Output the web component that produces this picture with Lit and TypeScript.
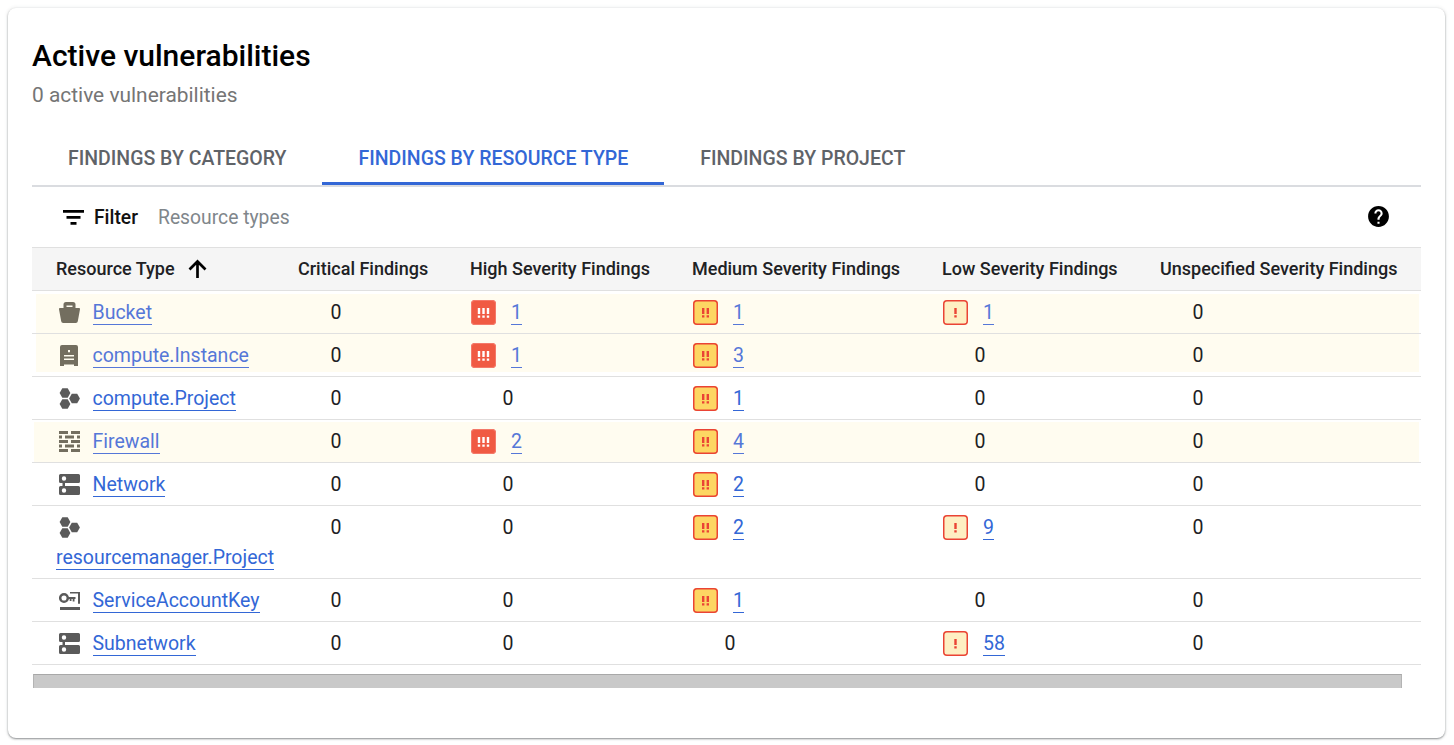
import { LitElement, html, css, svg } from 'lit';
import { customElement } from 'lit/decorators.js';

const hex = (cx: number, cy: number, r: number) =>
  [0, 60, 120, 180, 240, 300]
    .map((a) => {
      const t = (a * Math.PI) / 180;
      return `${(cx + r * Math.cos(t)).toFixed(2)},${(cy + r * Math.sin(t)).toFixed(2)}`;
    })
    .join(' ');

const ICONS: Record<string, unknown> = {
  bucket: svg`<path fill-rule="evenodd" d="M4.500 6V2.500A2.500 2.500 0 0 1 7 0h7a2.500 2.500 0 0 1 2.500 2.500V6H20a1 1 0 0 1 1 1.200l-2.200 12a2 2 0 0 1-2 1.800H4.200a2 2 0 0 1-2-1.800L0 7.200A1 1 0 0 1 1 6zM7.500 3.500V5h6V3.500z"/>`,
  instance: svg`<path fill-rule="evenodd" d="M3 0h14a2 2 0 0 1 2 2v19h-4v-1.500H5V21H1V2a2 2 0 0 1 2-2zM9 5v2.200h2V5zM5 10v1.600h10V10zM5 13.400V15h10v-1.600z"/>`,
  project: svg`<polygon points=${hex(6, 5, 5.4)}/><polygon points=${hex(6, 16, 5.4)}/><polygon points=${hex(15.5, 10.5, 5.4)}/>`,
  firewall: svg`<path d="M0 0h9v3H0zM12 0h9v3h-9zM0 4.500h3v3H0zM6 4.500h9v3H6zM18 4.500h3v3h-3zM0 9h9v3H0zM12 9h9v3h-9zM0 13.500h3v3H0zM6 13.500h9v3H6zM18 13.500h3v3h-3zM0 18h9v3H0zM12 18h9v3h-9z"/>`,
  network: svg`<path fill-rule="evenodd" d="M1.500 0h18A1.500 1.500 0 0 1 21 1.500V7.500A1.500 1.500 0 0 1 19.500 9H6v3h13.500a1.500 1.500 0 0 1 1.500 1.500v6a1.500 1.500 0 0 1-1.500 1.500h-18A1.500 1.500 0 0 1 0 19.500v-6A1.500 1.500 0 0 1 1.500 12H3.500V9H1.500A1.500 1.500 0 0 1 0 7.500V1.500A1.500 1.500 0 0 1 1.500 0zM5 2.300a2.200 2.200 0 1 0 0 4.400 2.200 2.200 0 0 0 0-4.400zM5 14.300a2.200 2.200 0 1 0 0 4.400 2.200 2.200 0 0 0 0-4.400z"/>`,
  key: svg`<g transform="translate(0 2)"><circle cx="5" cy="6" r="3.800" fill="none" stroke="currentColor" stroke-width="2.500"/><path d="M11 0h10v11.700h-2V1.500h-8zM8.500 5h8v2h-1v2.500h-1.800V7h-1.200v2h-1.800V7H8.500zM1 15h20v3H1z"/></g>`,
};

const BADGES: Record<string, unknown> = {
  high: svg`<path fill="#fff" d="M6.800 8h2.400v6H6.800zM6.800 15.500h2.400v2.300H6.800zM11.300 8h2.400v6h-2.400zM11.300 15.500h2.400v2.300h-2.400zM15.800 8h2.400v6h-2.400zM15.800 15.500h2.400v2.300h-2.400z"/>`,
  med: svg`<path fill="#ea4335" d="M9 8h2.400v6H9zM9 15.300h2.400v2.300H9zM13.600 8H16v6h-2.400zM13.600 15.300H16v2.300h-2.400z"/>`,
  low: svg`<path fill="#ea4335" d="M11.300 8h2.400v6h-2.400zM11.300 15.300h2.400v2.300h-2.400z"/>`,
};

type Count = [string, number] | 0;
interface Row {
  icon: string;
  name: string;
  hl?: string;
  tall?: boolean;
  high: Count;
  med: Count;
  low: Count;
}

const ROWS: Row[] = [
  { icon: 'bucket', name: 'Bucket', hl: 'hl-a', high: ['high', 1], med: ['med', 1], low: ['low', 1] },
  { icon: 'instance', name: 'compute.Instance', hl: 'hl-b', high: ['high', 1], med: ['med', 3], low: 0 },
  { icon: 'project', name: 'compute.Project', high: 0, med: ['med', 1], low: 0 },
  { icon: 'firewall', name: 'Firewall', hl: 'hl-c', high: ['high', 2], med: ['med', 4], low: 0 },
  { icon: 'network', name: 'Network', high: 0, med: ['med', 2], low: 0 },
  { icon: 'project', name: 'resourcemanager.Project', tall: true, high: 0, med: ['med', 2], low: ['low', 9] },
  { icon: 'key', name: 'ServiceAccountKey', high: 0, med: ['med', 1], low: 0 },
  { icon: 'network', name: 'Subnetwork', high: 0, med: 0, low: ['low', 58] },
];

@customElement('app-root')
export class AppRoot extends LitElement {
  static styles = css`
    :host {
      display: block;
      height: 745px;
      box-sizing: border-box;
      padding: 8px 9px 7px 8px;
      overflow: hidden;
      font-family: Roboto, sans-serif;
      background: #fff;
      color: #202124;
    }
    .card {
      box-sizing: border-box;
      height: 730px;
      padding: 30px 24px 0;
      background: #fff;
      border-radius: 8px;
      box-shadow: 0 1px 2px rgba(60, 64, 67, 0.55), 0 0 4px rgba(60, 64, 67, 0.12);
    }
    h1 {
      margin: 0;
      font-size: 30px;
      line-height: 36px;
      font-weight: 500;
      color: #000;
    }
    .sub {
      margin-top: 6px;
      font-size: 20.9px;
      line-height: 30px;
      color: #757575;
    }
    .tabs {
      display: flex;
      margin-top: 25px;
      border-bottom: 2px solid #dadce0;
    }
    .tab {
      padding: 0 36px;
      height: 50px;
      line-height: 48px;
      box-sizing: border-box;
      font-size: 19.5px;
      font-weight: 500;
      color: #5f6368;
      border-bottom: 3px solid transparent;
    }
    .tab.active {
      color: #3367d6;
      border-bottom-color: #3367d6;
    }
    .toolbar {
      display: flex;
      align-items: center;
      height: 60px;
      padding: 0 30px 0 31px;
      font-size: 19.3px;
    }
    .toolbar .f {
      margin-left: 10px;
      font-weight: 500;
      color: #111;
    }
    .toolbar .ph {
      margin-left: 20px;
      color: #80868b;
    }
    .toolbar .help {
      margin-left: auto;
      margin-top: -1px;
    }
    .grid {
      display: grid;
      grid-template-columns: 242px 172px 222px 250px 218px 1fr;
      padding-left: 24px;
    }
    .head {
      height: 44px;
      box-sizing: border-box;
      padding-bottom: 2px;
      align-items: center;
      background: #f5f5f5;
      border-top: 1px solid #e0e0e0;
      border-bottom: 1px solid #e0e0e0;
      font-size: 18px;
      font-weight: 500;
      color: #202124;
    }
    .head .sort {
      display: flex;
      align-items: center;
      gap: 13px;
    }
    .head .sort svg {
      margin-top: 1px;
    }
    .row {
      box-sizing: border-box;
      min-height: 43px;
      padding-top: 9px;
      align-items: start;
      border-bottom: 1px solid #e0e0e0;
      --ink: #5a5a5a;
      --link: #3367d6;
    }
    .row.tall {
      height: 73px;
    }
    .hl-a,
    .hl-b,
    .hl-c {
      --ink: #736e5f;
      --link: #5577d8;
      --hl: linear-gradient(#fffcf0, #fffcf0);
    }
    .hl-a {
      background: var(--hl) no-repeat 4px 3px / calc(100% - 6px) 39px;
    }
    .hl-b {
      background: var(--hl) no-repeat 4px 0 / calc(100% - 6px) 38px;
    }
    .hl-c {
      background: var(--hl) no-repeat 2px 2px / calc(100% - 4px) 40px;
    }
    .name {
      display: flex;
      flex-wrap: wrap;
      align-items: flex-start;
      column-gap: 12.5px;
      row-gap: 6px;
      color: var(--ink);
    }
    .name svg {
      display: block;
      width: 21px;
      height: 21px;
      margin: 1.500px 0 1.500px 3px;
      fill: currentColor;
    }
    a {
      padding-top: 1px;
      color: var(--link);
      text-decoration: none;
      border-bottom: 1px solid var(--link);
      font-size: 19.500px;
      line-height: 23px;
    }
    .cell {
      display: flex;
      align-items: flex-start;
      gap: 15px;
      height: 24px;
      font-size: 19.500px;
    }
    .cell.zero {
      width: 76px;
      justify-content: center;
      align-items: center;
      color: #202124;
    }
    .badge {
      display: block;
      width: 25px;
      height: 25px;
      box-sizing: border-box;
      border-radius: 4px;
      margin-left: 1px;
    }
    .badge svg {
      display: block;
      width: 25px;
      height: 25px;
    }
    .badge.high {
      background: #f05a43;
      box-shadow: inset 0 0 0 1px #f4796a;
    }
    .badge.med {
      background: #fdd663;
      box-shadow: inset 0 0 0 1.500px #ea4335;
    }
    .badge.low {
      background: #feefc3;
      box-shadow: inset 0 0 0 1.500px #ea4335;
    }
    .scroll {
      height: 14px;
      margin: 9px 19px 0 1px;
      box-sizing: border-box;
      background: #c9c9c9;
      border-top: 1px solid #a8a8a8;
      border-left: 1px solid #b4b4b4;
      border-right: 1px solid #b4b4b4;
    }
  `;

  private count(c: Count) {
    if (c === 0) return html`<div class="cell zero">0</div>`;
    return html`<div class="cell">
      <span class="badge ${c[0]}"><svg viewBox="0 0 25 25">${BADGES[c[0]]}</svg></span>
      <a href="#">${c[1]}</a>
    </div>`;
  }

  render() {
    return html`
      <div class="card">
        <h1>Active vulnerabilities</h1>
        <div class="sub">0 active vulnerabilities</div>
        <div class="tabs">
          <div class="tab">FINDINGS BY CATEGORY</div>
          <div class="tab active">FINDINGS BY RESOURCE TYPE</div>
          <div class="tab">FINDINGS BY PROJECT</div>
        </div>
        <div class="toolbar">
          <svg width="21" height="15" viewBox="0 0 21 15"><path d="M0 0h21v2.700H0zM3.500 6h14v2.700h-14zM7.500 12h6v2.700h-6z" /></svg>
          <span class="f">Filter</span>
          <span class="ph">Resource types</span>
          <svg class="help" width="25" height="25" viewBox="0 0 24 24"><path d="M12 2C6.480 2 2 6.480 2 12s4.480 10 10 10 10-4.480 10-10S17.520 2 12 2zm1 17h-2v-2h2v2zm2.070-7.750l-.9.920C13.450 12.900 13 13.500 13 15h-2v-.5c0-1.100.45-2.100 1.170-2.830l1.240-1.260c.37-.36.59-.86.59-1.410 0-1.100-.9-2-2-2s-2 .9-2 2H8c0-2.210 1.790-4 4-4s4 1.790 4 4c0 .88-.36 1.680-.93 2.250z" /></svg>
        </div>
        <div class="grid head">
          <div class="sort">
            Resource Type
            <svg width="19" height="19" viewBox="0 0 19 19"><path d="M9.500 19V3M1.500 10.500L9.500 2.500l8 8" fill="none" stroke="#000" stroke-width="2.700" /></svg>
          </div>
          <div>Critical Findings</div>
          <div>High Severity Findings</div>
          <div>Medium Severity Findings</div>
          <div>Low Severity Findings</div>
          <div>Unspecified Severity Findings</div>
        </div>
        ${ROWS.map(
          (r) => html`
            <div class="grid row ${r.hl ?? ''} ${r.tall ? 'tall' : ''}">
              <div class="name">
                <svg viewBox="0 0 21 21">${ICONS[r.icon]}</svg>
                <a href="#">${r.name}</a>
              </div>
              ${this.count(0)} ${this.count(r.high)} ${this.count(r.med)} ${this.count(r.low)} ${this.count(0)}
            </div>
          `
        )}
        <div class="scroll"></div>
      </div>
    `;
  }
}
